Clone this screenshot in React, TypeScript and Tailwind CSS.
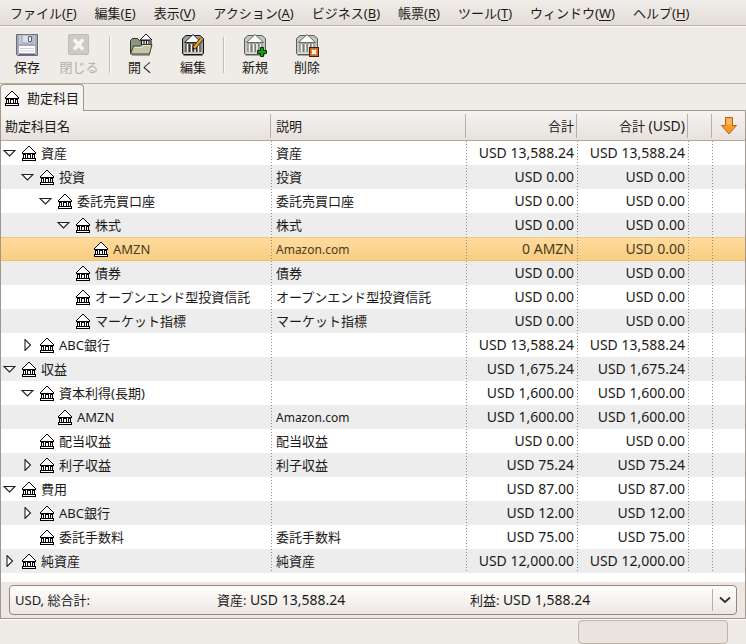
import { useState, type ReactNode } from "react";

type Account = {
  level: number;
  name: string;
  description?: string;
  total: string;
  usd?: string;
  state?: "open" | "closed";
};

const ACCOUNTS: Account[] = [
  { level: 0, name: "資産", description: "資産", total: "USD 13,588.24", state: "open" },
  { level: 1, name: "投資", description: "投資", total: "USD 0.00", state: "open" },
  { level: 2, name: "委託売買口座", description: "委託売買口座", total: "USD 0.00", state: "open" },
  { level: 3, name: "株式", description: "株式", total: "USD 0.00", state: "open" },
  { level: 4, name: "AMZN", description: "Amazon.com", total: "0 AMZN", usd: "USD 0.00" },
  { level: 3, name: "債券", description: "債券", total: "USD 0.00" },
  { level: 3, name: "オープンエンド型投資信託", description: "オープンエンド型投資信託", total: "USD 0.00" },
  { level: 3, name: "マーケット指標", description: "マーケット指標", total: "USD 0.00" },
  { level: 1, name: "ABC銀行", total: "USD 13,588.24", state: "closed" },
  { level: 0, name: "収益", total: "USD 1,675.24", state: "open" },
  { level: 1, name: "資本利得(長期)", total: "USD 1,600.00", state: "open" },
  { level: 2, name: "AMZN", description: "Amazon.com", total: "USD 1,600.00" },
  { level: 1, name: "配当収益", description: "配当収益", total: "USD 0.00" },
  { level: 1, name: "利子収益", description: "利子収益", total: "USD 75.24", state: "closed" },
  { level: 0, name: "費用", total: "USD 87.00", state: "open" },
  { level: 1, name: "ABC銀行", total: "USD 12.00", state: "closed" },
  { level: 1, name: "委託手数料", description: "委託手数料", total: "USD 75.00" },
  { level: 0, name: "純資産", description: "純資産", total: "USD 12,000.00", state: "closed" },
];

const INDENT = ["pl-px", "pl-[19px]", "pl-[37px]", "pl-[55px]", "pl-[73px]"];

const MENUS: [string, string][] = [
  ["ファイル", "F"],
  ["編集", "E"],
  ["表示", "V"],
  ["アクション", "A"],
  ["ビジネス", "B"],
  ["帳票", "R"],
  ["ツール", "T"],
  ["ウィンドウ", "W"],
  ["ヘルプ", "H"],
];

const DOTTED =
  "bg-[repeating-linear-gradient(to_bottom,#8d8d8d_0px,#8d8d8d_1px,transparent_1px,transparent_3px)] bg-[length:1px_100%] bg-right bg-no-repeat";

function BankIcon() {
  return (
    <svg width="14" height="15" viewBox="0 0 14 15" shapeRendering="crispEdges" className="shrink-0" aria-hidden="true">
      <path d="M6 1h2v1h1v1h1v1h1v1h1v1h1v7H1V6h1V5h1V4h1V3h1V2h1z" fill="#fff" />
      <path
        d="M6 0h2v1H6zM5 1h1v1H5zM8 1h1v1H8zM4 2h1v1H4zM9 2h1v1H9zM3 3h1v1H3zM10 3h1v1h-1zM2 4h1v1H2zM11 4h1v1h-1zM1 5h1v1H1zM12 5h1v1h-1zM0 6h1v1H0zM13 6h1v1h-1zM0 7h14v1H0zM1 8h3v1H1zM5 8h4v1H5zM10 8h3v1h-3zM1 9h1v3H1zM3 9h1v3H3zM5 9h1v3H5zM8 9h1v3H8zM10 9h1v3h-1zM12 9h1v3h-1zM1 12h12v1H1zM0 12h1v2H0zM13 12h1v2h-1zM0 14h14v1H0z"
        fill="#000"
      />
      <path d="M1 13h12v1H1z" fill="#fff" />
    </svg>
  );
}

function Expander({ open }: { open: boolean }) {
  return (
    <svg width="14" height="12" viewBox="0 0 14 12" aria-hidden="true">
      <path d={open ? "M2 3.500h11L7.500 9z" : "M5 .5v11L10.500 6z"} fill="#fff" stroke="#222" strokeWidth="1.100" />
    </svg>
  );
}

function SaveIcon() {
  return (
    <svg width="24" height="24" viewBox="0 0 24 24" aria-hidden="true">
      <path d="M1.500 1.500h21v21h-20l-1-1z" fill="#a3a8bb" stroke="#666b7c" />
      <path d="M4 2h16v9H4z" fill="#c5cad8" />
      <path d="M7 2h11v8H7z" fill="#dde1e7" stroke="#8c91a0" strokeWidth=".8" />
      <path d="M13.500 3.500h3v5h-3z" fill="#eef0f5" stroke="#545d75" />
      <path d="M3.500 12.500h17v8h-17z" fill="#fff" stroke="#a9a6bb" />
      <path d="M5 15.500h14M5 18h14" stroke="#cfd1d8" />
      <path d="M4 21.500h16" stroke="#795f88" />
    </svg>
  );
}

function CloseIcon() {
  return (
    <svg width="24" height="24" viewBox="0 0 24 24" aria-hidden="true">
      <rect x="1.500" y="1.500" width="20" height="20" rx="1.500" fill="#cdc9c4" stroke="#bfbab4" />
      <path d="m7 6.500 9 10M16 6.500l-9 10" stroke="#f6f4f1" strokeWidth="3.600" />
    </svg>
  );
}

function OpenIcon() {
  return (
    <svg width="24" height="24" viewBox="0 0 24 24" aria-hidden="true">
      <path d="M1.500 20.500V7.500l2-2h5l2 2h10v13z" fill="#8d947a" stroke="#33362b" />
      <path d="m11 7 6-6 6 6z" fill="#fff" stroke="#111" />
      <path d="M12 8h10v5H12z" fill="#fff" />
      <path d="M12.500 8v4M15 8v4M17.500 8v4M20 8v4M22 8v3" stroke="#111" strokeWidth="1.200" />
      <path d="m1.500 21 3-8h7l1.500-1.500h10l-2.500 9.500z" fill="#c2c7a8" stroke="#3b3f32" />
      <path d="M5.500 14.500h7l1.500-2h7" fill="none" stroke="#e3e6d0" />
      <path d="M3 22h18" stroke="#55584d" />
    </svg>
  );
}

function VaultIcon({ faded, children }: { faded?: boolean; children: ReactNode }) {
  const ink = faded ? "#5a5d5a" : "#151515";
  return (
    <svg width="24" height="24" viewBox="0 0 24 24" aria-hidden="true">
      <path
        d="M1.500 5.500 5 2.500h14l3.500 3v15l-1 1h-19l-1-1z"
        fill={faded ? "#c3c5bf" : "#9ea398"}
        stroke={ink}
      />
      <path d="M3.500 9.500 12 1.500l8.500 8z" fill="#fbfbfa" stroke={ink} strokeWidth=".9" />
      <path d="M4.500 10.500h15v9h-15z" fill={faded ? "#7b7e7a" : "#333"} />
      <path d="M6.500 11v8M10.500 11v8M14 11v8M17.500 11v8" stroke="#f4f4f0" strokeWidth="1.700" />
      <path d="M3 20h18" stroke="#e3e4de" strokeWidth="1.400" />
      <path d="M2.500 22h19" stroke={ink} />
      {children}
    </svg>
  );
}

function EditIcon() {
  return (
    <VaultIcon>
      <path d="M12.500 15.500 20.500 6" stroke="#4a3008" strokeWidth="4" />
      <path d="M13 15 20.500 6" stroke="#efa02c" strokeWidth="2.400" />
      <path d="m11 17 1-3 2 2z" fill="#222" />
    </VaultIcon>
  );
}

function NewIcon() {
  return (
    <VaultIcon faded>
      <path d="M17.500 14.500h3v3h3v3h-3v3h-3v-3h-3v-3h3z" fill="#12a012" stroke="#042c04" />
    </VaultIcon>
  );
}

function DeleteIcon() {
  return (
    <VaultIcon faded>
      <rect x="14.500" y="14.500" width="9" height="9" fill="#d2691e" stroke="#4a1c04" />
      <path d="m17 17 4 4M21 17l-4 4" stroke="#fff" strokeWidth="1.900" />
    </VaultIcon>
  );
}

function DownArrowIcon() {
  return (
    <svg width="18" height="20" viewBox="0 0 18 20" aria-hidden="true">
      <path d="M5.500 1.500h7v8h4L9 18 1.500 9.500h4z" fill="#f39a26" stroke="#b8661a" strokeLinejoin="round" />
      <path d="M6.500 2.500h5v6h-5z" fill="#f7b968" />
    </svg>
  );
}

function ToolButton({ label, disabled, children }: { label: string; disabled?: boolean; children: ReactNode }) {
  return (
    <button
      type="button"
      disabled={disabled}
      className="flex w-[52px] flex-col items-center pt-1.5 leading-5 disabled:text-[#b5aea7]"
    >
      {children}
      {label}
    </button>
  );
}

function ToolSeparator() {
  return <div className="mx-1 my-2.5 w-0.5 shrink-0 border-l border-[#c4bdb5] bg-[#faf9f7]" />;
}

function HeaderCell({ children, right }: { children?: ReactNode; right?: boolean }) {
  return (
    <th scope="col" className="border-b border-[#b5a99f] p-0 font-normal">
      <div
        className={`mr-px flex h-6 items-center border-r border-[#b9afa6] ${
          right ? "justify-end pr-0.5" : "pl-1"
        }`}
      >
        {children}
      </div>
    </th>
  );
}

export default function App() {
  const [selected, setSelected] = useState(4);

  return (
    <div className="flex min-h-screen flex-col bg-[#efebe7] font-['Noto_Sans','Noto_Sans_CJK_JP',sans-serif] text-[13px] leading-5 text-[#1c1a18]">
      <nav
        aria-label="メニュー"
        className="flex h-[26px] shrink-0 items-center gap-[18px] overflow-hidden border-b border-[#b8aea5] bg-linear-to-b from-[#f0edea] to-[#e3ddd7] pl-2.5 whitespace-nowrap"
      >
        {MENUS.map(([label, key]) => (
          <button key={key} type="button">
            {label}(<span className="underline underline-offset-2">{key}</span>)
          </button>
        ))}
      </nav>

      <div className="flex h-[58px] shrink-0 border-t border-b border-t-white border-b-[#b8aea5] pl-px">
        <ToolButton label="保存"><SaveIcon /></ToolButton>
        <ToolButton label="閉じる" disabled><CloseIcon /></ToolButton>
        <ToolSeparator />
        <ToolButton label="開く"><OpenIcon /></ToolButton>
        <ToolButton label="編集"><EditIcon /></ToolButton>
        <ToolSeparator />
        <ToolButton label="新規"><NewIcon /></ToolButton>
        <ToolButton label="削除"><DeleteIcon /></ToolButton>
      </div>

      <div role="tablist" className="flex h-[27px] shrink-0">
        <button
          type="button"
          role="tab"
          aria-selected="true"
          className="flex w-[84px] items-center gap-2 rounded-t-sm border border-b-0 border-[#a3968b] bg-[#f5f3f0] pl-1 whitespace-nowrap"
        >
          <BankIcon />
          勘定科目
        </button>
        <div className="flex-1 border-b border-[#a3968b]" />
      </div>

      <main className="border-x border-b border-[#a3968b] bg-white">
        <table className="w-full table-fixed border-separate border-spacing-0 text-left">
          <colgroup>
            <col className="w-[271px]" />
            <col />
            <col className="w-[111px]" />
            <col className="w-[111px]" />
            <col className="w-6" />
            <col className="w-8" />
          </colgroup>
          <thead>
            <tr className="h-[30px] bg-linear-to-b from-[#f5f3f1] to-[#e7e1dc]">
              <HeaderCell>勘定科目名</HeaderCell>
              <HeaderCell>説明</HeaderCell>
              <HeaderCell right>合計</HeaderCell>
              <HeaderCell right>
                <span>合計 <span className="text-sm">(USD)</span></span>
              </HeaderCell>
              <HeaderCell />
              <th scope="col" className="border-b border-[#b5a99f] p-0">
                <button type="button" aria-label="列の表示" className="flex h-6 w-full items-center justify-center">
                  <DownArrowIcon />
                </button>
              </th>
            </tr>
          </thead>
          <tbody>
            {ACCOUNTS.map((row, i) => (
              <tr
                key={i}
                aria-selected={i === selected}
                onClick={() => setSelected(i)}
                className={
                  i === selected
                    ? "bg-linear-to-b from-[#ffdc9e] to-[#f8cd81] text-[#4a3a20] shadow-[inset_0_1px_0_#f0c878,inset_0_-1px_0_#eec06e]"
                    : "even:bg-[#ededed]"
                }
              >
                <td className={`h-6 p-0 ${DOTTED}`}>
                  <div className={`flex items-center ${INDENT[row.level]}`}>
                    <span className="flex w-5 shrink-0">
                      {row.state && (
                        <button type="button" aria-label={row.state === "open" ? "折りたたむ" : "展開"}>
                          <Expander open={row.state === "open"} />
                        </button>
                      )}
                    </span>
                    <BankIcon />
                    <span className="pl-[5px] whitespace-nowrap">{row.name}</span>
                  </div>
                </td>
                <td className={`h-6 p-0 pl-1 whitespace-nowrap ${DOTTED}`}>
                  {row.description === "Amazon.com" ? <span className="text-xs">Amazon.com</span> : row.description}
                </td>
                <td className={`h-6 p-0 pr-1 text-right text-sm whitespace-nowrap ${DOTTED}`}>{row.total}</td>
                <td className={`h-6 p-0 pr-1 text-right text-sm whitespace-nowrap ${DOTTED}`}>
                  {row.usd ?? row.total}
                </td>
                <td className={`h-6 p-0 ${DOTTED}`} />
                <td className="h-6 p-0" />
              </tr>
            ))}
          </tbody>
        </table>

        <div className="mt-[9px] bg-[#ece7e2] px-2 py-[3px]">
          <button
            type="button"
            aria-haspopup="listbox"
            className="flex h-[30px] w-full items-center rounded-sm border border-[#93877e] bg-linear-to-b from-white via-[#f5f3f1] to-[#ebe6e1] pl-[5px] text-left whitespace-nowrap"
          >
            <span className="grid flex-1 grid-cols-[202px_253px_1fr]">
              <span>USD, 総合計:</span>
              <span>資産: <span className="text-sm">USD 13,588.24</span></span>
              <span>利益: <span className="text-sm">USD 1,588.24</span></span>
            </span>
            <span className="flex h-[22px] w-6 items-center justify-center border-l border-[#b8aea5]">
              <svg width="14" height="8" viewBox="0 0 14 8" aria-hidden="true">
                <path d="m2 1.500 5 4.500 5-4.500" fill="none" stroke="#333" strokeWidth="1.800" />
              </svg>
            </span>
          </button>
        </div>
      </main>

      <footer className="flex min-h-6 flex-1 justify-end border-t border-white">
        <div className="mr-[18px] h-6 w-[150px] rounded-sm border border-[#bfb3a9] bg-[#eae4df]" />
      </footer>
    </div>
  );
}
